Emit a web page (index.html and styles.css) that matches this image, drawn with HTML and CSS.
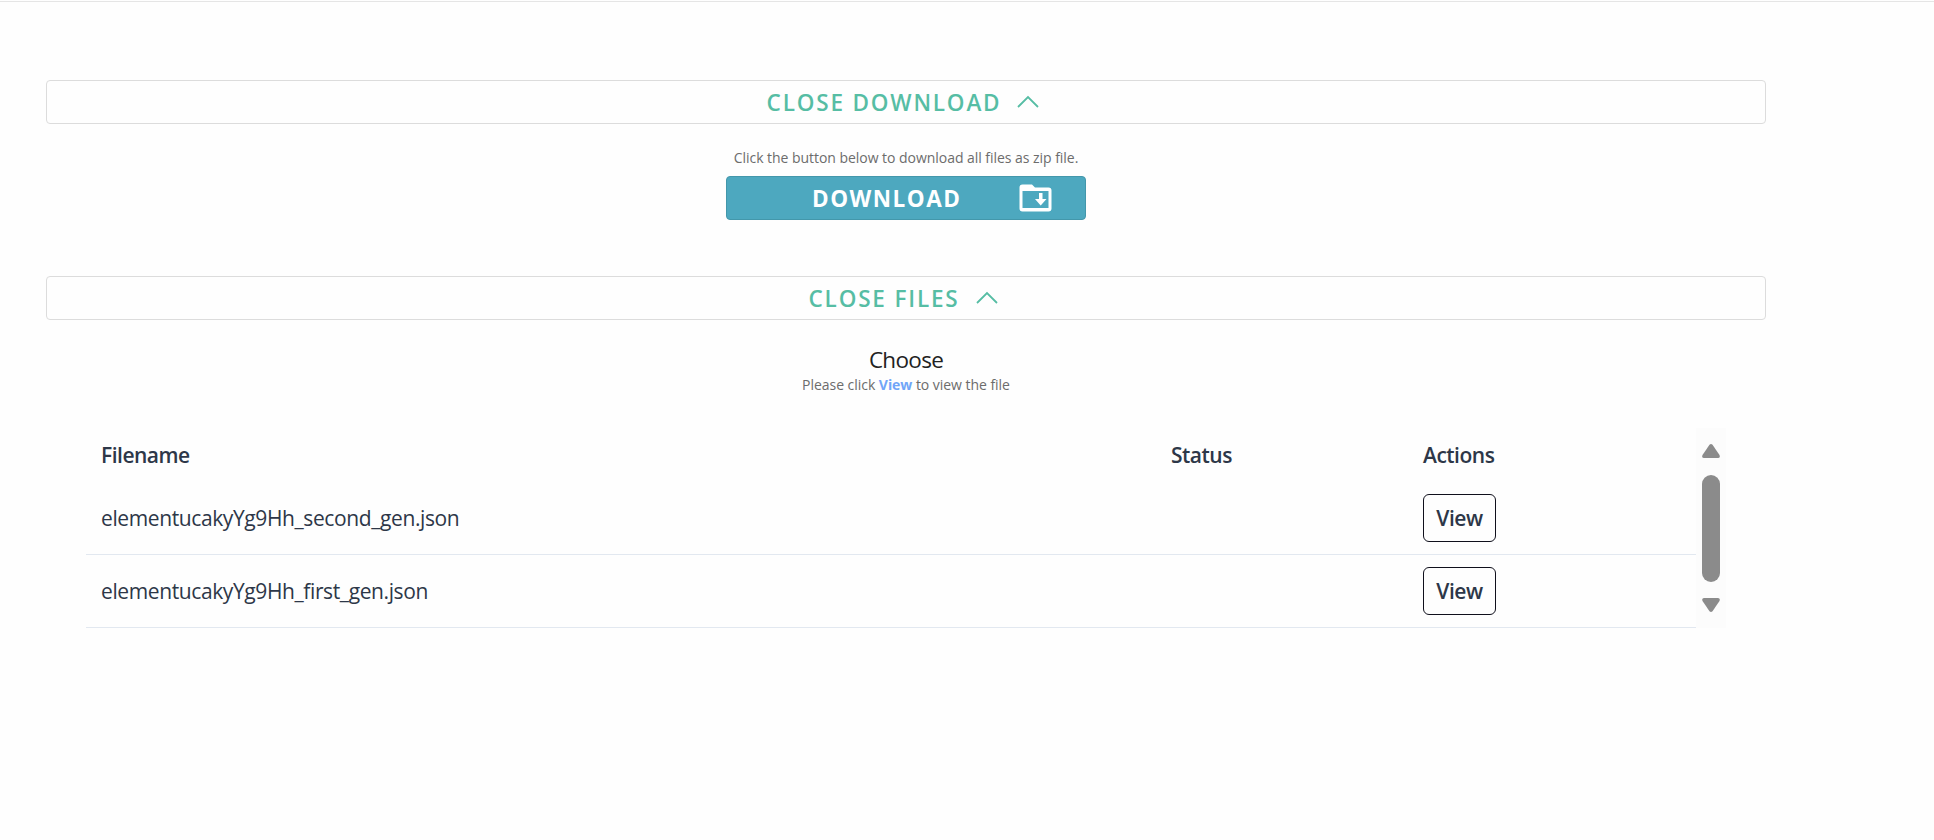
FILE: index.html
```html
<!DOCTYPE html>
<html lang="en">
<head>
<meta charset="utf-8">
<title>Files</title>
<link rel="stylesheet" href="styles.css">
</head>
<body>
<main class="page">
  <button class="toggle"><span class="toggle-label">CLOSE DOWNLOAD</span><svg class="chevron" width="22" height="14" viewBox="0 0 22 14"><path d="M1 12 11 2l10 10" fill="none" stroke="currentColor" stroke-width="1.8"/></svg></button>
  <section class="download">
    <p class="hint">Click the button below to download all files as zip file.</p>
    <button class="download-button"><span class="download-label">DOWNLOAD</span><svg class="folder" width="33" height="28" viewBox="0 0 33 28"><path fill="#fff" fill-rule="evenodd" d="M3.500.5H13l3 3h13.500a3 3 0 0 1 3 3v18a3 3 0 0 1-3 3h-26a3 3 0 0 1-3-3v-21a3 3 0 0 1 3-3ZM3.500 7v17h26V7ZM20 9h3.500v6h4l-5.800 6.500L16 15h4Z"/></svg></button>
  </section>
  <button class="toggle"><span class="toggle-label">CLOSE FILES</span><svg class="chevron" width="22" height="14" viewBox="0 0 22 14"><path d="M1 12 11 2l10 10" fill="none" stroke="currentColor" stroke-width="1.8"/></svg></button>
  <section class="choose">
    <h2 class="title">Choose</h2>
    <p class="hint">Please click <b class="accent">View</b> to view the file</p>
  </section>
  <section class="files">
    <div class="table">
      <div class="row head"><span>Filename</span><span>Status</span><span>Actions</span></div>
      <div class="row"><span>elementucakyYg9Hh_second_gen.json</span><span></span><button class="view">View</button></div>
      <div class="row"><span>elementucakyYg9Hh_first_gen.json</span><span></span><button class="view">View</button></div>
    </div>
    <div class="scrollbar">
      <svg width="18" height="14" viewBox="0 0 18 14"><path d="M7.500.8Q9-.8 10.500.8l7 10.200q1 3-1.500 3H2q-2.500 0-1.500-3Z" fill="#8b8b8b"/></svg>
      <div class="thumb"></div>
      <svg width="18" height="14" viewBox="0 0 18 14"><path d="M7.500 13.200q1.500 1.600 3 0l7-10.200q1-3-1.500-3H2Q-.5 0 .5 3Z" fill="#8b8b8b"/></svg>
    </div>
  </section>
</main>
</body>
</html>
```
FILE: styles.css
```css
* { box-sizing: border-box; }
body {
  margin: 0;
  min-height: 840px;
  background: #fefefe;
  font-family: "Open Sans", "Noto Sans", sans-serif;
  color: #2d3748;
}
button { font: inherit; color: inherit; letter-spacing: inherit; padding: 0; }
.page {
  margin-top: 1px;
  border-top: 1px solid #e5e5e5;
  padding: 78px 168px 0 46px;
}
.toggle {
  display: flex;
  justify-content: center;
  align-items: center;
  width: 100%;
  height: 44px;
  border: 1px solid #dcdcdc;
  border-radius: 4px;
  background: #fefefe;
  color: #56bda4;
}
.toggle-label {
  padding-top: 2px;
  font-size: 22.5px;
  font-weight: 600;
  line-height: 30px;
  letter-spacing: 1.82px;
  white-space: nowrap;
}
.chevron { margin: 0 6px 0 16px; }
.download {
  display: flex;
  flex-direction: column;
  align-items: center;
  height: 152px;
  padding-top: 24px;
}
.hint {
  margin: 0;
  font-size: 14px;
  line-height: 20px;
  letter-spacing: -0.04px;
  color: #6c6c6c;
  white-space: nowrap;
}
.download-button {
  display: flex;
  align-items: center;
  width: 360px;
  height: 44px;
  margin-top: 8px;
  padding-left: 85px;
  border: 1px solid #4397ab;
  border-radius: 4px;
  background: #4da8bf;
  color: #fff;
}
.download-label {
  width: 207px;
  text-align: left;
  font-size: 22.5px;
  font-weight: 700;
  letter-spacing: 1.5px;
}
.choose {
  display: flex;
  flex-direction: column;
  align-items: center;
  height: 108px;
  padding-top: 25px;
}
.title {
  margin: 0 0 1px;
  font-size: 22.5px;
  font-weight: 400;
  line-height: 29px;
  letter-spacing: -0.7px;
  color: #222;
}
.accent { color: #70a5f8; }
.files {
  display: flex;
  width: 1640px;
  height: 200px;
  margin-left: 40px;
}
.table { width: 1610px; }
.row {
  display: grid;
  grid-template-columns: 1070px 252px 1fr;
  align-items: center;
  height: 73px;
  padding-left: 15px;
  border-bottom: 1px solid #e2e8f0;
  font-size: 21px;
  letter-spacing: -0.39px;
}
.head {
  height: 54px;
  border-bottom: 0;
  font-weight: 600;
  letter-spacing: -0.5px;
}
.view {
  width: 73px;
  height: 48px;
  border: 1px solid #10101c;
  border-radius: 6px;
  background: #fefefe;
  font-weight: 600;
}
.scrollbar {
  display: flex;
  flex-direction: column;
  align-items: center;
  justify-content: space-between;
  width: 30px;
  padding: 16px 0;
  background: #fcfcfc;
}
.thumb { width: 18px; height: 107px; border-radius: 9px; background: #8b8b8b; }
```
